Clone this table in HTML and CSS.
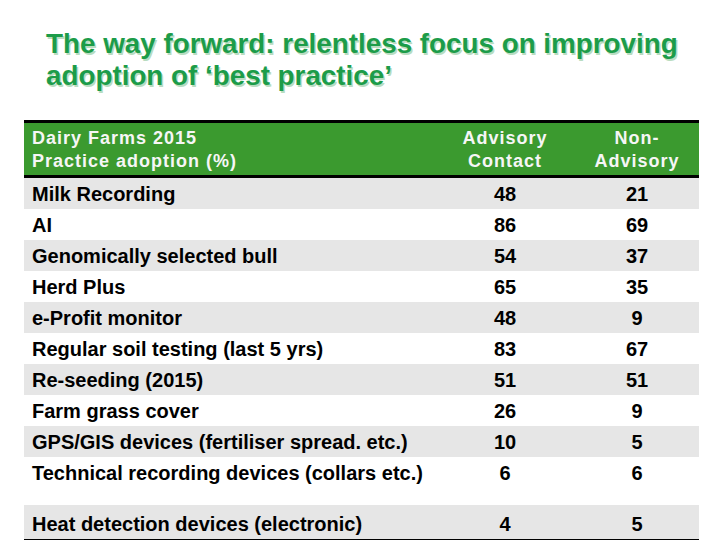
FILE: index.html
```html
<!DOCTYPE html>
<html lang="en">
<head>
<meta charset="utf-8">
<title>The way forward</title>
<link rel="stylesheet" href="styles.css">
</head>
<body>
<h1 class="title">The way forward: relentless focus on improving<br>adoption of ‘best practice’</h1>
<table class="adopt">
  <thead>
    <tr>
      <th class="c-name">Dairy Farms 2015<br>Practice adoption (%)</th>
      <th class="c-num c-adv">Advisory<br>Contact</th>
      <th class="c-num c-non">Non-<br>Advisory</th>
    </tr>
  </thead>
  <tbody>
    <tr class="alt"><td>Milk Recording</td><td class="num">48</td><td class="num">21</td></tr>
    <tr><td>AI</td><td class="num">86</td><td class="num">69</td></tr>
    <tr class="alt"><td>Genomically selected bull</td><td class="num">54</td><td class="num">37</td></tr>
    <tr><td>Herd Plus</td><td class="num">65</td><td class="num">35</td></tr>
    <tr class="alt"><td>e-Profit monitor</td><td class="num">48</td><td class="num">9</td></tr>
    <tr><td>Regular soil testing (last 5 yrs)</td><td class="num">83</td><td class="num">67</td></tr>
    <tr class="alt"><td>Re-seeding (2015)</td><td class="num">51</td><td class="num">51</td></tr>
    <tr><td>Farm grass cover</td><td class="num">26</td><td class="num">9</td></tr>
    <tr class="alt"><td>GPS/GIS devices (fertiliser spread. etc.)</td><td class="num">10</td><td class="num">5</td></tr>
    <tr class="tall"><td>Technical recording devices (collars etc.)</td><td class="num">6</td><td class="num">6</td></tr>
    <tr class="alt last"><td>Heat detection devices (electronic)</td><td class="num">4</td><td class="num">5</td></tr>
  </tbody>
</table>
</body>
</html>
```
FILE: styles.css
```css
html, body {
  margin: 0;
  padding: 0;
  background: #ffffff;
}

body {
  font-family: "Liberation Sans", Arial, sans-serif;
  width: 720px;
  height: 540px;
  overflow: hidden;
}

.title {
  margin: 0;
  padding: 28px 0 0 46px;
  font-size: 27.8px;
  line-height: 32px;
  font-weight: bold;
  color: #1c9c49;
  text-shadow: 1.5px 1.5px 0 #b9dcc0;
}

.adopt {
  margin: 28px 0 0 24px;
  width: 675px;
  border-collapse: collapse;
  table-layout: fixed;
}

.adopt thead tr {
  background: #3b9a2f;
  border-top: 3px solid #000;
  border-bottom: 3px solid #000;
}

.adopt th {
  color: #f6f6f6;
  font-size: 18px;
  line-height: 23px;
  letter-spacing: 1px;
  font-weight: bold;
  padding: 4px 0 2px 0;
  vertical-align: top;
}

.adopt .c-name {
  width: 403px;
  text-align: left;
  padding-left: 8px;
}

.adopt .c-adv {
  width: 140px;
  text-align: center;
}

.adopt .c-non {
  width: 124px;
  text-align: center;
}

.adopt td {
  font-size: 20px;
  line-height: 29px;
  font-weight: bold;
  color: #000;
  padding: 2px 0 0 0;
  vertical-align: top;
  white-space: nowrap;
}

.adopt td:first-child {
  padding-left: 8px;
}

.adopt td.num {
  text-align: center;
}

.adopt tr.alt {
  background: #e6e6e6;
}

.adopt tr.tall td {
  height: 46px;
}

.adopt tr.last td {
  padding-top: 5px;
}

.adopt tr.last {
  border-bottom: 2px solid #000;
}
```
